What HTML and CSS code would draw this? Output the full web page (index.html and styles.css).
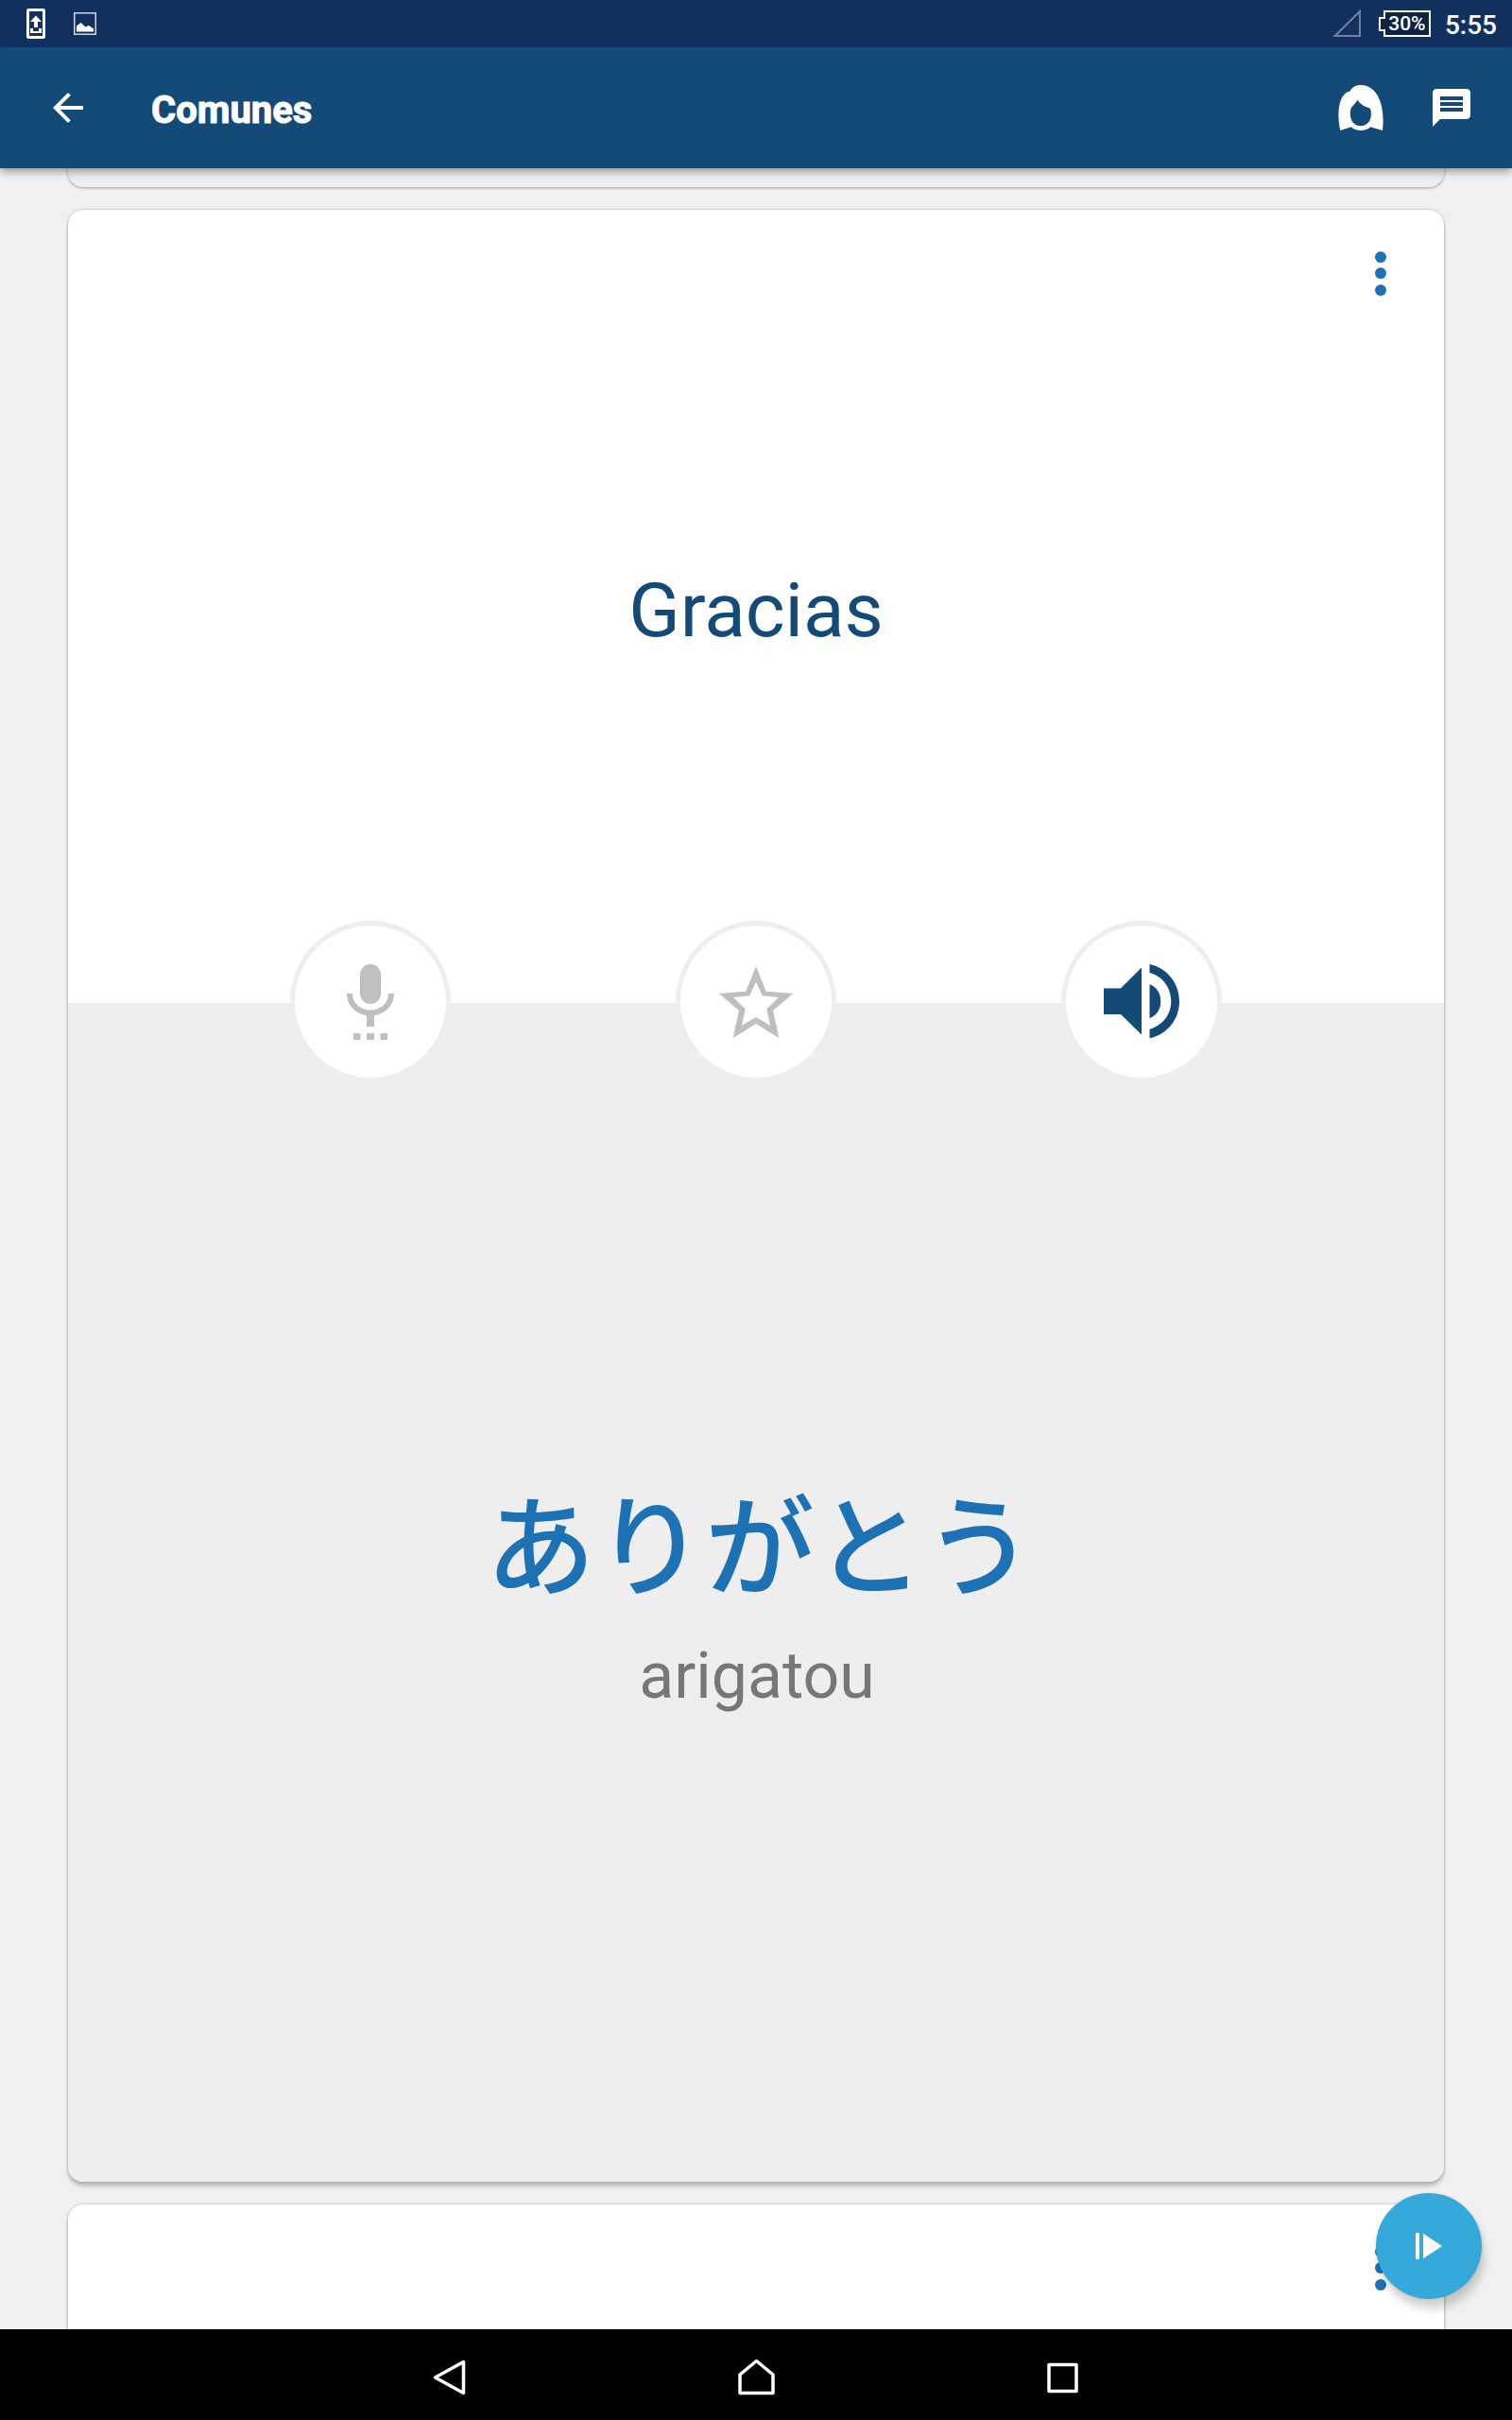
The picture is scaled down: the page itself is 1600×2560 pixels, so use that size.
FILE: index.html
```html
<!DOCTYPE html>
<html lang="es">
<head>
    <meta charset="UTF-8">
    <meta name="viewport" content="width=device-width, initial-scale=1.0">
    <title>Comunes</title>
    <link rel="stylesheet" href="styles.css">
</head>
<body>
    <div class="status-bar">
        <div class="status-left">
            <svg width="20" height="32" viewBox="0 0 20 32">
                <rect x="1.5" y="1.5" width="17" height="29" rx="1" fill="none" stroke="#fff" stroke-width="3"/>
                <path d="M10 7.5l6 6.5h-4v6H8v-6H4zM4 21h3v3h6v-3h3v5H4z" fill="#fff"/>
            </svg>
            <svg width="24" height="24" viewBox="0 0 24 24">
                <rect x=".75" y=".75" width="22.5" height="22.5" fill="none" stroke="#d0d6df" stroke-width="1.5"/>
                <path d="M3 20.5v-6l4.5-3.5 5 4.5 3.5-1.5 5 3.5v3z" fill="#fff"/>
            </svg>
        </div>
        <div class="status-right">
            <svg width="30" height="30" viewBox="0 0 30 30">
                <path d="M29 2v26H2.500z" fill="none" stroke="#71829f" stroke-width="2"/>
            </svg>
            <div class="battery">
                <svg width="55" height="28" viewBox="0 0 55 28">
                    <path d="M6 1h48v26H6v-6H1V8h5z" fill="#0d2344" stroke="#fff" stroke-width="2"/>
                </svg>
                <span class="battery-level">30%</span>
            </div>
            <span class="clock">5:55</span>
        </div>
    </div>

    <header class="app-bar">
        <svg width="48" height="48" viewBox="0 0 24 24">
            <path d="M20 11H7.830l5.590-5.590L12 4l-8 8 8 8 1.410-1.410L7.830 13H20z" fill="#fff"/>
        </svg>
        <h1>Comunes</h1>
        <div class="actions">
            <svg width="48" height="48" viewBox="0 0 48 48">
                <path fill="#fff" fill-rule="evenodd" d="M2.300 48C-1.500 32-.3 9 12.500 6.500C15 2 19 0 24 0C42 0 50 22 47 48L34 44.200C30 49.200 18 49.200 14 44.200zM20.300 15.700C18 20.500 13.500 22.500 13 27C11.500 37 17 43.300 24 43.300C31 43.300 36 37 34.700 28C34.600 26 34 24.500 33 24.300C28 23 23.500 20 20.300 15.700z"/>
            </svg>
            <svg width="48" height="48" viewBox="0 0 24 24">
                <path fill="#fff" d="M20 2H4c-1.100 0-1.990.9-1.990 2L2 22l4-4h14c1.100 0 2-.9 2-2V4c0-1.100-.9-2-2-2zm-2 12H6v-2h12v2zm0-3H6V9h12v2zm0-3H6V6h12v2z"/>
            </svg>
        </div>
    </header>

    <main class="feed">
        <div class="card card-prev"></div>

        <div class="card card-phrase">
            <div class="side side-top">
                <div class="more"><i></i><i></i><i></i></div>
                <p class="phrase">Gracias</p>
            </div>
            <div class="side side-bottom">
                <p class="translation">ありがとう</p>
                <p class="romaji">arigatou</p>
            </div>
            <div class="controls">
                <button class="round-btn">
                    <svg width="80" height="80" viewBox="0 0 80 80" fill="#bfbfbf">
                        <rect x="29" y="0" width="22" height="42" rx="11"/>
                        <path d="M15 31H21C21 42 30 48.500 40 48.500S59 42 59 31H65C65 43 56 52.500 44 54.300V66H36V54.300C24 52.500 15 43 15 31zM22 73h7.500v7H22zM36 73h8v7h-8zM50.500 73h7.500v7h-7.500z"/>
                    </svg>
                </button>
                <button class="round-btn">
                    <svg width="80" height="80" viewBox="0 0 80 80" fill="#bfbfbf">
                        <path fill-rule="evenodd" d="M40 2.300L50.700 28.700 79.300 31 58 49 64.300 78 40 63 15.700 78 22 49 .7 31 29.300 28.700zM40 18.700L33.500 33.300 16 35 28.700 47.300 25 64.700 40 56 55 64.700 51.300 47.300 64 35 46.500 33.300z"/>
                    </svg>
                </button>
                <button class="round-btn">
                    <svg width="80" height="80" viewBox="0 0 80 80" fill="#144a78">
                        <path d="M0 25.500H18L40 3.500V74.500L18 53H0zM48.500 21.300C56 24 60.300 31 60.300 39.200S56 54.500 48.500 57zM48.500 0C67 4 80 20 80 39.200S67 74.500 48.500 78.300V68.700C62 65 71.300 53.500 71.300 39S62 12.500 48.500 9z"/>
                    </svg>
                </button>
            </div>
        </div>

        <div class="card card-next">
            <div class="more"><i></i><i></i><i></i></div>
        </div>
    </main>

    <button class="fab">
        <svg width="28" height="28" viewBox="0 0 28 28" fill="#fff">
            <path d="M0 0h4v28H0zM8 .7L28 14 8 27.300z"/>
        </svg>
    </button>

    <nav class="nav-bar">
        <svg width="40" height="40" viewBox="0 0 40 40">
            <path d="M34.500 3.500v33L4.500 20z"/>
        </svg>
        <svg width="40" height="40" viewBox="0 0 40 40">
            <path d="M20.500 2.500L38 17v19.500H3V17z"/>
        </svg>
        <svg width="40" height="40" viewBox="0 0 40 40">
            <path d="M6 6.500h29v28H6z"/>
        </svg>
    </nav>
</body>
</html>
```
FILE: styles.css
```css
:root {
    --status-bg: #12315f;
    --bar-bg: #144a78;
    --page-bg: #f1f1f1;
    --card-alt: #eeeeee;
    --accent: #1c72b4;
    --fab: #36a9db;
}

* {
    margin: 0;
    padding: 0;
    box-sizing: border-box;
}

body {
    height: 2560px;
    display: flex;
    flex-direction: column;
    background: var(--page-bg);
    font-family: Roboto, "Noto Sans CJK JP", sans-serif;
    overflow: hidden;
}

svg {
    display: block;
}

button {
    border: none;
    cursor: pointer;
}

/* Status bar */
.status-bar {
    height: 50px;
    flex-shrink: 0;
    display: flex;
    justify-content: space-between;
    align-items: center;
    padding: 0 16px 0 28px;
    background: var(--status-bg);
    color: #fff;
    z-index: 2;
}

.status-left {
    display: flex;
    align-items: center;
    gap: 30px;
}

.status-right {
    display: flex;
    align-items: center;
}

.battery {
    position: relative;
    margin: 0 15px 0 19px;
}

.battery-level {
    position: absolute;
    top: 0;
    left: 7px;
    width: 46px;
    line-height: 29px;
    font-size: 21px;
    font-weight: 500;
    text-align: center;
}

.clock {
    font-size: 28px;
    font-weight: 500;
    line-height: 50px;
    padding-top: 3px;
}

/* App bar */
.app-bar {
    height: 128px;
    flex-shrink: 0;
    display: flex;
    align-items: center;
    padding: 0 40px 0 48px;
    background: var(--bar-bg);
    color: #fff;
    box-shadow: 0 4px 8px rgba(0, 0, 0, 0.35);
    z-index: 2;
}

.app-bar h1 {
    margin-left: 64px;
    padding-top: 5px;
    font-size: 40px;
    font-weight: 700;
    -webkit-text-stroke: 1px #fff;
}

.actions {
    display: flex;
    gap: 48px;
    margin-left: auto;
}

/* Cards */
.feed {
    flex: 1;
    min-height: 0;
    display: flex;
    flex-direction: column;
    gap: 24px;
    padding: 0 72px;
    overflow: hidden;
}

.card {
    position: relative;
    flex-shrink: 0;
    background: #fff;
    border-radius: 16px;
    box-shadow: 0 0 3px rgba(0, 0, 0, 0.28), 0 5px 4px rgba(0, 0, 0, 0.2);
}

.card-prev {
    height: 60px;
    margin-top: -40px;
    background: var(--card-alt);
    box-shadow: 0 1px 3px rgba(0, 0, 0, 0.35);
}

.card-phrase {
    height: 2086px;
    display: flex;
    flex-direction: column;
}

.card-next {
    height: 400px;
}

.side {
    display: flex;
    flex-direction: column;
    align-items: center;
}

.side-top {
    height: 839px;
    justify-content: center;
}

.side-bottom {
    flex: 1;
    padding-top: 498px;
    background: var(--card-alt);
    border-radius: 0 0 16px 16px;
}

.phrase {
    font-size: 80px;
    line-height: 94px;
    color: var(--bar-bg);
    padding-top: 8px;
}

.translation {
    padding-left: 8px;
    font-size: 116px;
    font-weight: 500;
    line-height: 160px;
    color: var(--accent);
}

.romaji {
    margin-top: 14px;
    padding-left: 2px;
    font-size: 68px;
    line-height: 80px;
    color: #777;
}

.more {
    position: absolute;
    top: 43.5px;
    right: 61px;
    display: flex;
    flex-direction: column;
    gap: 5.5px;
}

.more i {
    width: 12px;
    height: 12px;
    border-radius: 50%;
    background: var(--accent);
}

/* Round buttons straddling both halves of the card */
.controls {
    position: absolute;
    top: 752px;
    left: 0;
    right: 0;
    display: flex;
    justify-content: center;
    gap: 238px;
}

.round-btn {
    width: 170px;
    height: 171px;
    display: flex;
    align-items: center;
    justify-content: center;
    background: #fff;
    border: 5px solid var(--card-alt);
    border-radius: 50%;
}

.fab {
    position: absolute;
    top: 2320px;
    right: 32px;
    width: 112px;
    height: 112px;
    display: flex;
    align-items: center;
    justify-content: center;
    background: var(--fab);
    border-radius: 50%;
    box-shadow: 0 0 3px rgba(0, 0, 0, 0.12), 3px 10px 10px rgba(0, 0, 0, 0.18);
}

/* System navigation */
.nav-bar {
    height: 96px;
    flex-shrink: 0;
    display: flex;
    justify-content: center;
    align-items: center;
    gap: 284px;
    padding-top: 6px;
    background: #000;
    z-index: 2;
}

.nav-bar svg {
    fill: none;
    stroke: #fff;
    stroke-width: 3.5;
    stroke-linejoin: round;
}
```
